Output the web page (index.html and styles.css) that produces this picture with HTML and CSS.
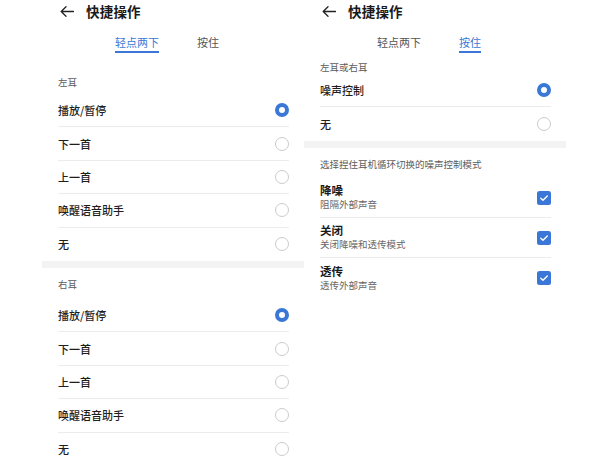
FILE: index.html
```html
<!DOCTYPE html>
<html lang="zh-CN">
<head>
<meta charset="utf-8">
<title>快捷操作</title>
<link rel="stylesheet" href="styles.css">
</head>
<body>
<div class="page">
  <section class="screen">
    <header class="appbar">
      <svg class="back" width="14" height="11" viewBox="0 0 14 11"><path d="M13.5 5.5H1.2M6 0.8L1.2 5.5L6 10.2" fill="none" stroke="#222" stroke-width="1.3" stroke-linecap="round" stroke-linejoin="round"/></svg>
      <h1 class="title">快捷操作</h1>
    </header>
    <nav class="tabs">
      <span class="tab active">轻点两下</span>
      <span class="tab">按住</span>
    </nav>
    <div class="group-label gl-left1">左耳</div>
    <ul class="list">
      <li class="row"><span class="label">播放/暂停</span><span class="radio on"></span></li>
      <li class="row"><span class="label">下一首</span><span class="radio"></span></li>
      <li class="row"><span class="label">上一首</span><span class="radio"></span></li>
      <li class="row"><span class="label">唤醒语音助手</span><span class="radio"></span></li>
      <li class="row"><span class="label">无</span><span class="radio"></span></li>
    </ul>
    <div class="band"></div>
    <div class="group-label gl-left2">右耳</div>
    <ul class="list">
      <li class="row"><span class="label">播放/暂停</span><span class="radio on"></span></li>
      <li class="row"><span class="label">下一首</span><span class="radio"></span></li>
      <li class="row"><span class="label">上一首</span><span class="radio"></span></li>
      <li class="row"><span class="label">唤醒语音助手</span><span class="radio"></span></li>
      <li class="row"><span class="label">无</span><span class="radio"></span></li>
    </ul>
  </section>

  <section class="screen">
    <header class="appbar">
      <svg class="back" width="14" height="11" viewBox="0 0 14 11"><path d="M13.5 5.5H1.2M6 0.8L1.2 5.5L6 10.2" fill="none" stroke="#222" stroke-width="1.3" stroke-linecap="round" stroke-linejoin="round"/></svg>
      <h1 class="title">快捷操作</h1>
    </header>
    <nav class="tabs">
      <span class="tab">轻点两下</span>
      <span class="tab active">按住</span>
    </nav>
    <div class="group-label gl-right1">左耳或右耳</div>
    <ul class="list">
      <li class="row tall"><span class="label">噪声控制</span><span class="radio on"></span></li>
      <li class="row tall"><span class="label">无</span><span class="radio"></span></li>
    </ul>
    <div class="band"></div>
    <div class="group-label gl-right2">选择捏住耳机循环切换的噪声控制模式</div>
    <ul class="list">
      <li class="row check-row">
        <div class="texts"><span class="ctitle">降噪</span><span class="csub">阻隔外部声音</span></div>
        <span class="checkbox"><svg width="14" height="14" viewBox="0 0 14 14"><path d="M3.8 7.2L6 9.3L10.3 4.9" fill="none" stroke="#fff" stroke-width="1.4" stroke-linecap="round" stroke-linejoin="round"/></svg></span>
      </li>
      <li class="row check-row">
        <div class="texts"><span class="ctitle">关闭</span><span class="csub">关闭降噪和透传模式</span></div>
        <span class="checkbox"><svg width="14" height="14" viewBox="0 0 14 14"><path d="M3.8 7.2L6 9.3L10.3 4.9" fill="none" stroke="#fff" stroke-width="1.4" stroke-linecap="round" stroke-linejoin="round"/></svg></span>
      </li>
      <li class="row check-row">
        <div class="texts"><span class="ctitle">透传</span><span class="csub">透传外部声音</span></div>
        <span class="checkbox"><svg width="14" height="14" viewBox="0 0 14 14"><path d="M3.8 7.2L6 9.3L10.3 4.9" fill="none" stroke="#fff" stroke-width="1.4" stroke-linecap="round" stroke-linejoin="round"/></svg></span>
      </li>
    </ul>
  </section>
</div>
</body>
</html>
```
FILE: styles.css
```css
* { box-sizing: border-box; }
html, body {
  margin: 0;
  padding: 0;
  background: #fff;
}
body {
  font-family: "Noto Sans CJK SC", "Noto Sans", "Liberation Sans", sans-serif;
  color: #1e1e1e;
  width: 608px;
  height: 456px;
  overflow: hidden;
}
.page {
  display: flex;
  padding-left: 42px;
}
.screen {
  flex: none;
  width: 262px;
  background: #fff;
}
.appbar {
  height: 22px;
  display: flex;
  align-items: center;
  padding-left: 18px;
}
.back {
  display: block;
  flex: none;
}
.title {
  margin: 0 0 0 12px;
  font-size: 13.5px;
  font-weight: 700;
  line-height: 18px;
  color: #1a1a1a;
  letter-spacing: 0.2px;
}
.tabs {
  display: flex;
  gap: 38px;
  padding: 13px 0 0 73px;
}
.tab {
  font-size: 11px;
  line-height: 14px;
  padding-bottom: 2px;
  border-bottom: 2px solid transparent;
  color: #555;
}
.tab.active {
  color: #3a77d6;
  border-bottom-color: #3a77d6;
}
.group-label {
  font-size: 9.5px;
  line-height: 12px;
  color: #5c5c5c;
  padding-left: 16px;
}
.gl-left1 { padding-top: 23px; padding-bottom: 6px; }
.gl-left2 { padding-top: 10px; padding-bottom: 9px; }
.gl-right1 { padding-top: 8px; padding-bottom: 0; }
.gl-right2 { padding-top: 10px; padding-bottom: 8px; }
.list {
  list-style: none;
  margin: 0;
  padding: 0;
}
.row {
  height: 33.4px;
  margin: 0 15px 0 16px;
  display: flex;
  align-items: center;
  justify-content: space-between;
  border-bottom: 1px solid #ececec;
}
.row:last-child { border-bottom: none; }
.row.tall { height: 34px; }
.label {
  font-size: 11px;
  line-height: 14px;
  font-weight: 500;
  color: #1e1e1e;
}
.radio {
  flex: none;
  width: 14px;
  height: 14px;
  border-radius: 50%;
  border: 1px solid #cbcbcb;
}
.radio.on {
  border: 4px solid #3a77d6;
}
.band {
  height: 7px;
  background: #f3f3f3;
}
.check-row {
  height: 40px;
  align-items: center;
}
.texts {
  display: flex;
  flex-direction: column;
  gap: 1px;
  padding-bottom: 1px;
}
.ctitle {
  font-size: 11.5px;
  line-height: 14px;
  font-weight: 600;
  color: #1a1a1a;
}
.csub {
  font-size: 9.5px;
  line-height: 13px;
  color: #666;
}
.checkbox {
  flex: none;
  width: 14px;
  height: 14px;
  border-radius: 2.5px;
  background: #3a77d6;
  display: block;
}
.checkbox svg { display: block; }
```
